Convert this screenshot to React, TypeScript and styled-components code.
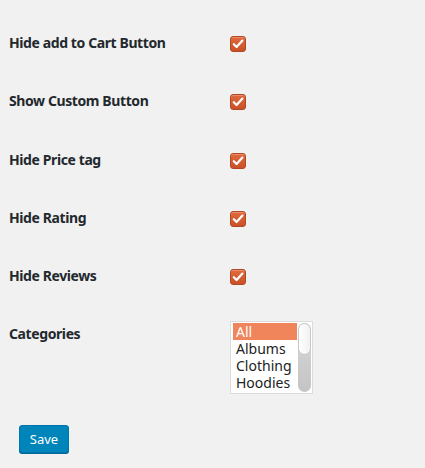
import React from 'react';
import styled, { createGlobalStyle } from 'styled-components';

const GlobalStyle = createGlobalStyle`
  html, body {
    margin: 0;
    padding: 0;
    background: #f1f1f1;
  }
  body {
    font-family: 'Noto Sans', 'DejaVu Sans', sans-serif;
    color: #23282d;
  }
`;

const Page = styled.div`
  width: 425px;
  height: 468px;
  box-sizing: border-box;
  padding: 14px 0 0 9px;
  background: #f1f1f1;
`;

const Row = styled.div`
  display: grid;
  grid-template-columns: 221px 1fr;
  align-items: start;
  min-height: 58.3px;
`;

const Label = styled.div`
  padding: 20px 0;
  font-size: 14px;
  font-weight: 700;
  line-height: 18px;
  color: #23282d;
  letter-spacing: -0.4px;
`;

const Cell = styled.div<{ $top: number }>`
  padding-top: ${(p) => p.$top}px;
  display: flex;
`;

const Check = styled.span`
  width: 16px;
  height: 16px;
  box-sizing: border-box;
  border-radius: 3px;
  border: 1px solid #b2461f;
  background: linear-gradient(#df6a3d, #c9512a);
  box-shadow: inset 0 1px 0 rgba(255, 255, 255, 0.25);
  display: flex;
  align-items: center;
  justify-content: center;
`;

const ListBox = styled.div`
  width: 83px;
  height: 73px;
  box-sizing: border-box;
  border: 1px solid #dcdcdc;
  background: #fff;
  display: flex;
  padding: 1px 1px 1px 2px;
`;

const Options = styled.div`
  flex: 1;
  min-width: 0;
  display: flex;
  flex-direction: column;
`;

const Option = styled.div<{ $selected?: boolean }>`
  box-sizing: border-box;
  font-size: 14px;
  line-height: 17px;
  height: 17px;
  padding-left: 3px;
  width: 64px;
  color: ${(p) => (p.$selected ? '#fff' : '#222')};
  background: ${(p) => (p.$selected ? '#f0845b' : 'transparent')};
  white-space: nowrap;
`;

const Track = styled.div`
  flex: 0 0 13px;
  width: 13px;
  margin-left: 2px;
  border-radius: 7px;
  background: linear-gradient(#d8d8d8, #c4c4c4);
  display: flex;
  flex-direction: column;
`;

const Thumb = styled.div`
  height: 32px;
  border-radius: 7px;
  border: 1px solid #c8c8c8;
  box-sizing: border-box;
  background: linear-gradient(90deg, #ffffff, #f1f1f1);
`;

const Submit = styled.div`
  padding: 31px 0 0 10px;
`;

const SaveButton = styled.button`
  width: 50px;
  height: 28px;
  box-sizing: border-box;
  border: 1px solid #0073aa;
  border-radius: 3px;
  background: #0085ba;
  box-shadow: 0 1px 0 #006799;
  color: #fff;
  font-family: 'Noto Sans', 'DejaVu Sans', sans-serif;
  font-size: 13px;
  line-height: 26px;
  padding: 0;
  cursor: pointer;
`;

const CheckBox = () => (
  <Check>
    <svg width="12" height="12" viewBox="0 0 12 12">
      <path
        d="M1.8 6.2 L4.6 9 L10.4 2.6"
        fill="none"
        stroke="#fff"
        strokeWidth="2.2"
        strokeLinecap="round"
        strokeLinejoin="round"
      />
    </svg>
  </Check>
);

const settings = [
  'Hide add to Cart Button',
  'Show Custom Button',
  'Hide Price tag',
  'Hide Rating',
  'Hide Reviews',
];

const categories = ['All', 'Albums', 'Clothing', 'Hoodies'];

const App = () => {
  return (
    <Page>
      <GlobalStyle />
      {settings.map((s) => (
        <Row key={s}>
          <Label>{s}</Label>
          <Cell $top={22}>
            <CheckBox />
          </Cell>
        </Row>
      ))}
      <Row>
        <Label>Categories</Label>
        <Cell $top={16}>
          <ListBox>
            <Options>
              {categories.map((c, i) => (
                <Option key={c} $selected={i === 0}>
                  {c}
                </Option>
              ))}
            </Options>
            <Track>
              <Thumb />
            </Track>
          </ListBox>
        </Cell>
      </Row>
      <Submit>
        <SaveButton>Save</SaveButton>
      </Submit>
    </Page>
  );
};

export default App;
